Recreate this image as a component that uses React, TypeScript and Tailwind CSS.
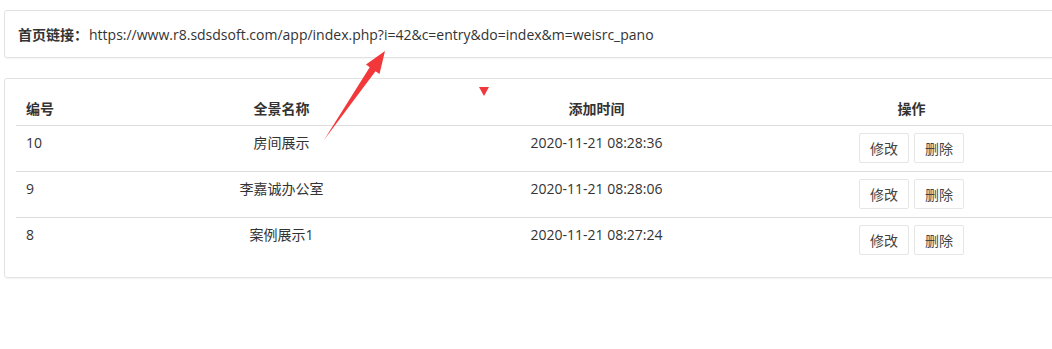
import React from 'react';

interface PanoRow {
  id: number;
  name: string;
  createdAt: string;
}

const rows: PanoRow[] = [
  { id: 10, name: '房间展示', createdAt: '2020-11-21 08:28:36' },
  { id: 9, name: '李嘉诚办公室', createdAt: '2020-11-21 08:28:06' },
  { id: 8, name: '案例展示1', createdAt: '2020-11-21 08:27:24' },
];

const homeUrl = 'https://www.r8.sdsdsoft.com/app/index.php?i=42&c=entry&do=index&m=weisrc_pano';

const App: React.FC = () => {
  return (
    <div
      className="relative w-[1052px] h-[349px] overflow-hidden bg-white text-[14px] text-[#333]"
      style={{ fontFamily: '"Open Sans", "Noto Sans CJK SC", sans-serif' }}
    >
      <div className="w-[1081px] pl-[4px] pt-[10px]">
        {/* Link panel */}
        <div className="h-[48px] flex items-center px-[13px] border border-[#e2e2e2] rounded-[3px] shadow-[0_1px_1px_rgba(0,0,0,0.04)]">
          <span className="font-bold">首页链接：</span>
          <span className="ml-px">{homeUrl}</span>
        </div>

        {/* List panel */}
        <div className="mt-[20px] px-[11px] pt-[14px] pb-[14px] border border-[#e2e2e2] rounded-[3px] shadow-[0_1px_1px_rgba(0,0,0,0.04)]">
          <table className="w-full border-collapse table-fixed">
            <colgroup>
              <col className="w-[108px]" />
              <col />
              <col />
              <col />
            </colgroup>
            <thead>
              <tr className="border-b border-[#ddd]">
                <th className="text-left font-bold px-[10px] py-[6px] leading-[20px]">编号</th>
                <th className="text-center font-bold px-[10px] py-[6px] leading-[20px]">全景名称</th>
                <th className="text-center font-bold px-[10px] py-[6px] leading-[20px]">添加时间</th>
                <th className="text-center font-bold px-[10px] py-[6px] leading-[20px]">操作</th>
              </tr>
            </thead>
            <tbody>
              {rows.map((row, index) => (
                <tr key={row.id} className={index < rows.length - 1 ? 'border-b border-[#ddd]' : ''}>
                  <td className="align-top text-left px-[10px] pt-[7px] leading-[20px]">{row.id}</td>
                  <td className="align-top text-center px-[10px] pt-[7px] leading-[20px]">{row.name}</td>
                  <td className="align-top text-center px-[10px] pt-[7px] leading-[20px]">{row.createdAt}</td>
                  <td className="align-top text-center px-[10px] pt-[7px] pb-[8px]">
                    <div className="flex justify-center gap-[5px]">
                      <button className="w-[50px] h-[30px] bg-white border border-[#e6e6e6] rounded-[2px] text-[14px] text-[#444]">
                        修改
                      </button>
                      <button className="w-[50px] h-[30px] bg-white border border-[#e6e6e6] rounded-[2px] text-[14px] text-[#444]">
                        删除
                      </button>
                    </div>
                  </td>
                </tr>
              ))}
            </tbody>
          </table>
        </div>
      </div>

      {/* Annotation marks drawn on top */}
      <svg className="absolute left-0 top-0 pointer-events-none" width="1052" height="349">
        <polygon
          points="324,140 375.5,71.2 379.5,74 385,51 366,64.5 369.7,67.2"
          fill="#f2383a"
        />
        <polygon points="479,87 489,87 484,96" fill="#f2383a" />
      </svg>
    </div>
  );
};

export default App;
